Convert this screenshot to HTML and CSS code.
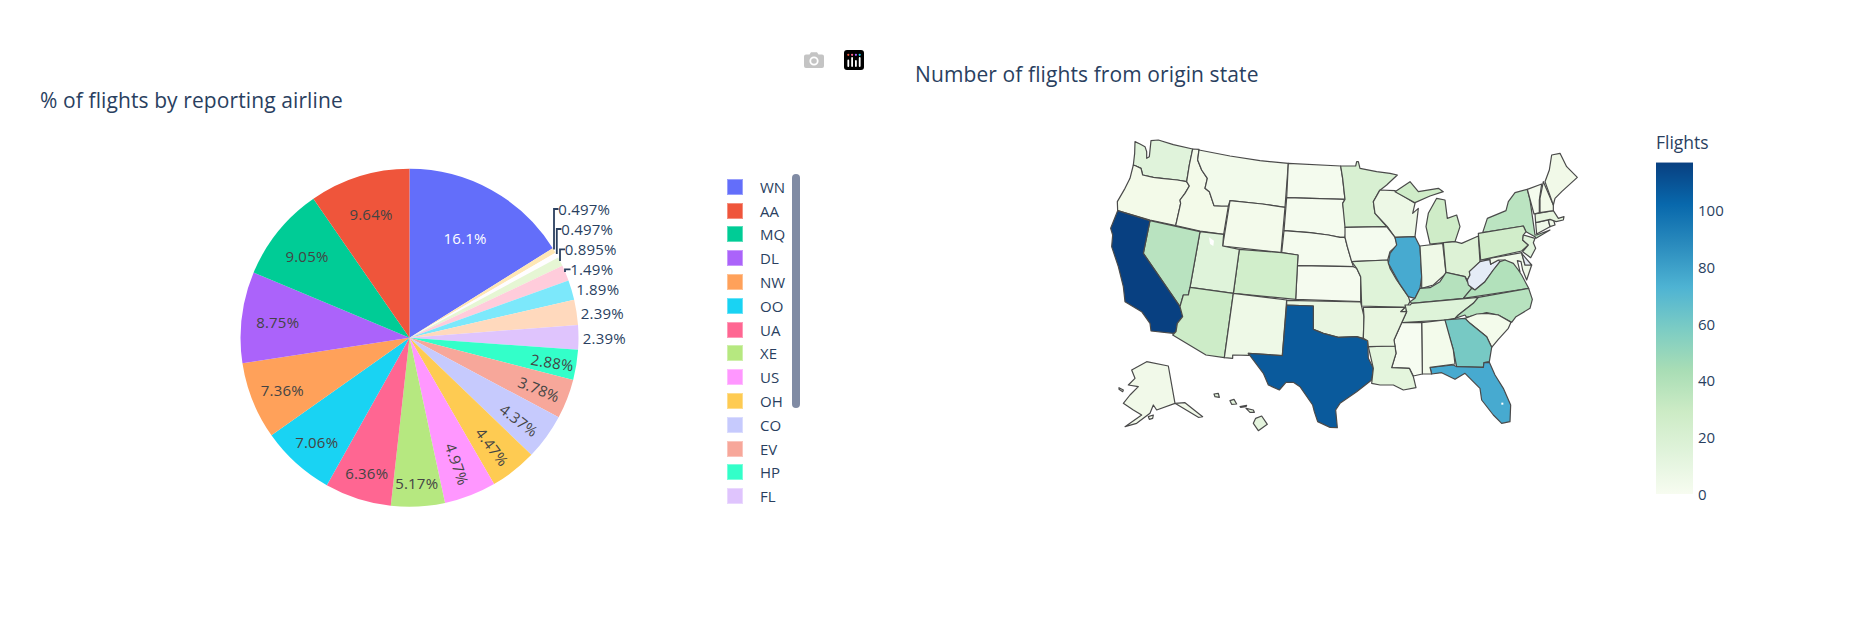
FILE: index.html
```html
<!DOCTYPE html>
<html lang="en">
<head>
<meta charset="utf-8">
<title>Flights dashboard</title>
<link rel="stylesheet" href="styles.css">
</head>
<body>
<main class="dash">
  <section class="panel panel-pie">
    <h2 class="chart-title">% of flights by reporting airline</h2>
    <div class="pie-row">
      <svg class="pie" viewBox="230 165 450 350" width="450" height="350" role="img" aria-label="Pie chart">
        <g transform="rotate(-90 409.5 337.8)" fill="none" stroke-width="169">
          <circle cx="409.5" cy="337.8" r="84.5" pathLength="100" stroke="#636efa" stroke-dasharray="16.1 100" stroke-dashoffset="0"/>
          <circle cx="409.5" cy="337.8" r="84.5" pathLength="100" stroke="#ffe7b6" stroke-dasharray="0.497 100" stroke-dashoffset="-16.1"/>
          <circle cx="409.5" cy="337.8" r="84.5" pathLength="100" stroke="#fffdff" stroke-dasharray="0.497 100" stroke-dashoffset="-16.597"/>
          <circle cx="409.5" cy="337.8" r="84.5" pathLength="100" stroke="#e6f6d4" stroke-dasharray="0.895 100" stroke-dashoffset="-17.094"/>
          <circle cx="409.5" cy="337.8" r="84.5" pathLength="100" stroke="#ffccdb" stroke-dasharray="1.49 100" stroke-dashoffset="-17.989"/>
          <circle cx="409.5" cy="337.8" r="84.5" pathLength="100" stroke="#7ce8fb" stroke-dasharray="1.89 100" stroke-dashoffset="-19.479"/>
          <circle cx="409.5" cy="337.8" r="84.5" pathLength="100" stroke="#ffd9bd" stroke-dasharray="2.39 100" stroke-dashoffset="-21.369"/>
          <circle cx="409.5" cy="337.8" r="84.5" pathLength="100" stroke="#dfc4fd" stroke-dasharray="2.39 100" stroke-dashoffset="-23.759"/>
          <circle cx="409.5" cy="337.8" r="84.5" pathLength="100" stroke="#33ffc9" stroke-dasharray="2.88 100" stroke-dashoffset="-26.149"/>
          <circle cx="409.5" cy="337.8" r="84.5" pathLength="100" stroke="#f7a79a" stroke-dasharray="3.78 100" stroke-dashoffset="-29.029"/>
          <circle cx="409.5" cy="337.8" r="84.5" pathLength="100" stroke="#c6cafd" stroke-dasharray="4.37 100" stroke-dashoffset="-32.809"/>
          <circle cx="409.5" cy="337.8" r="84.5" pathLength="100" stroke="#fecb52" stroke-dasharray="4.47 100" stroke-dashoffset="-37.179"/>
          <circle cx="409.5" cy="337.8" r="84.5" pathLength="100" stroke="#ff97ff" stroke-dasharray="4.97 100" stroke-dashoffset="-41.649"/>
          <circle cx="409.5" cy="337.8" r="84.5" pathLength="100" stroke="#b6e880" stroke-dasharray="5.17 100" stroke-dashoffset="-46.619"/>
          <circle cx="409.5" cy="337.8" r="84.5" pathLength="100" stroke="#ff6692" stroke-dasharray="6.36 100" stroke-dashoffset="-51.789"/>
          <circle cx="409.5" cy="337.8" r="84.5" pathLength="100" stroke="#19d3f3" stroke-dasharray="7.06 100" stroke-dashoffset="-58.149"/>
          <circle cx="409.5" cy="337.8" r="84.5" pathLength="100" stroke="#ffa15a" stroke-dasharray="7.36 100" stroke-dashoffset="-65.209"/>
          <circle cx="409.5" cy="337.8" r="84.5" pathLength="100" stroke="#ab63fa" stroke-dasharray="8.75 100" stroke-dashoffset="-72.569"/>
          <circle cx="409.5" cy="337.8" r="84.5" pathLength="100" stroke="#00cc96" stroke-dasharray="9.05 100" stroke-dashoffset="-81.319"/>
          <circle cx="409.5" cy="337.8" r="84.5" pathLength="100" stroke="#ef553b" stroke-dasharray="9.64 100" stroke-dashoffset="-90.369"/>
        </g>
        <g class="leaders">
          <path d="M558.5 209H554V249.5"/>
          <path d="M561.5 229H556.8V254"/>
          <path d="M565 249.3H560V261"/>
          <path d="M570.5 269.3H565V272"/>
        </g>
        <g class="slice-in">
          <text class="slice-white" x="465" y="238.3">16.1%</text>
          <text x="371" y="214.3">9.64%</text>
          <text x="307" y="255.7">9.05%</text>
          <text x="277.7" y="322.3">8.75%</text>
          <text x="282.3" y="390.3">7.36%</text>
          <text x="316.7" y="441.7">7.06%</text>
          <text x="366.7" y="472.7">6.36%</text>
          <text x="416.7" y="483.3">5.17%</text>
          <text transform="rotate(71 457.3 464)" x="457.3" y="464">4.97%</text>
          <text transform="rotate(53 492.3 446.7)" x="492.3" y="446.7">4.47%</text>
          <text transform="rotate(37 519 420)" x="519" y="420">4.37%</text>
          <text transform="rotate(22 539 389)" x="539" y="389">3.78%</text>
          <text transform="rotate(9 552.3 362.3)" x="552.3" y="362.3">2.88%</text>
        </g>
        <g class="slice-out">
          <text x="604.3" y="337.7">2.39%</text>
          <text x="602.3" y="312.7">2.39%</text>
          <text x="597.7" y="289.3">1.89%</text>
          <text x="591.7" y="269.3">1.49%</text>
          <text x="590.7" y="249.3">0.895%</text>
          <text x="587.3" y="229.3">0.497%</text>
          <text x="584.3" y="209.3">0.497%</text>
        </g>
      </svg>
      <ul class="legend">
        <li class="legend-item"><span class="swatch c-wn"></span>WN</li>
        <li class="legend-item"><span class="swatch c-aa"></span>AA</li>
        <li class="legend-item"><span class="swatch c-mq"></span>MQ</li>
        <li class="legend-item"><span class="swatch c-dl"></span>DL</li>
        <li class="legend-item"><span class="swatch c-nw"></span>NW</li>
        <li class="legend-item"><span class="swatch c-oo"></span>OO</li>
        <li class="legend-item"><span class="swatch c-ua"></span>UA</li>
        <li class="legend-item"><span class="swatch c-xe"></span>XE</li>
        <li class="legend-item"><span class="swatch c-us"></span>US</li>
        <li class="legend-item"><span class="swatch c-oh"></span>OH</li>
        <li class="legend-item"><span class="swatch c-co"></span>CO</li>
        <li class="legend-item"><span class="swatch c-ev"></span>EV</li>
        <li class="legend-item"><span class="swatch c-hp"></span>HP</li>
        <li class="legend-item"><span class="swatch c-fl"></span>FL</li>
      </ul>
      <div class="legend-scroll"></div>
    </div>
  </section>

  <section class="panel panel-map">
    <h2 class="chart-title">Number of flights from origin state</h2>
    <div class="map-row">
      <svg class="map" viewBox="0 0 1500 1200" width="500" height="400" role="img" aria-label="US map">
        <g class="states">
          <polygon fill="#e0f3db" points="135,65 150,72 165,80 170,95 170,115 178,110 183,62 205,60 250,74 308,87 298,135 290,185 262,180 215,175 190,172 158,165 153,145 138,138 130,135 134,100"/>
          <polygon fill="#f3fae9" points="130,135 138,138 153,145 158,165 190,172 215,175 262,180 290,185 298,198 285,220 270,240 272,250 257,317 180,300 83,272 82,245 105,205 120,175"/>
          <polygon fill="#f3fae9" points="308,87 327,88 323,120 335,150 352,175 345,205 358,215 372,257 395,258 415,258 401,343 330,333 257,317 272,250 270,240 285,220 298,198 290,185 298,135"/>
          <polygon fill="#f2faeb" points="327,90 420,108 510,122 595,130 585,262 517,252 420,242 415,258 395,258 372,257 358,215 345,205 352,175 335,150 323,120"/>
          <polygon fill="#f3faeb" points="420,242 517,252 585,262 573,398 398,378"/>
          <polygon fill="#f4fbee" points="595,130 752,138 758,175 765,238 590,233"/>
          <polygon fill="#f4fbee" points="590,233 765,238 758,250 770,322 765,352 750,352 715,345 660,338 582,332"/>
          <polygon fill="#f4fbee" points="582,332 660,338 715,345 750,352 765,352 772,380 790,440 622,437 624,405 575,398"/>
          <polygon fill="#f5fbef" points="622,437 790,440 800,445 812,470 812,545 617,538"/>
          <polygon fill="#d1eecb" points="448,388 575,398 624,405 617,538 430,520"/>
          <polygon fill="#dff3da" points="330,335 401,343 398,378 448,388 430,520 300,502"/>
          <polygon fill="#b9e3c0" points="180,302 330,335 300,502 295,525 280,525 270,560 160,400"/>
          <polygon fill="#084081" points="83,272 180,302 160,400 270,560 278,590 262,610 258,635 250,640 183,633 180,610 155,575 105,545 100,500 85,440 65,380 68,345 62,325"/>
          <polygon fill="#cdecc8" points="300,502 430,520 403,713 348,705 248,645 258,635 262,610 278,590 270,560 280,525 295,525"/>
          <polygon fill="#eef9e7" points="430,520 590,540 577,707 475,700 478,706 428,705 428,715 403,713"/>
          <polygon fill="#e9f6e1" points="590,541 812,546 822,590 820,655 800,650 745,652 700,640 670,628 670,558 590,555"/>
          <polygon fill="#0a5a9c" points="590,555 670,558 670,628 700,640 745,652 800,650 833,662 835,715 850,745 845,780 800,815 750,850 737,870 742,923 720,922 683,905 673,875 668,855 630,800 610,787 588,787 568,810 535,795 520,760 475,700 577,707"/>
          <polygon fill="#d8f0d2" points="752,138 797,138 800,125 805,125 810,145 860,155 900,160 922,165 890,195 868,212 850,245 855,280 890,320 765,322 758,250 765,238 758,175"/>
          <polygon fill="#edf8e6" points="870,210 915,212 975,250 968,280 985,265 975,350 915,352 892,320 855,280 850,245"/>
          <polygon fill="#cfecc8" points="915,215 960,185 985,215 1045,205 1060,215 1020,228 975,248"/>
          <polygon fill="#cfecc8" points="1015,280 1040,235 1065,240 1072,295 1100,285 1110,320 1095,365 1020,372 1008,320"/>
          <polygon fill="#f4fbef" points="765,322 890,320 915,352 922,375 900,395 893,420 785,425 772,380 765,352"/>
          <polygon fill="#dff3d9" points="785,425 893,420 900,445 920,480 955,530 960,545 950,562 948,578 932,575 945,562 815,558 812,470 800,445"/>
          <polygon fill="#47aad0" points="915,352 975,350 990,380 995,470 990,505 975,535 955,530 928,490 895,430 900,400 920,375"/>
          <polygon fill="#eff9e7" points="990,378 1058,370 1068,460 1030,495 995,505 995,470"/>
          <polygon fill="#ddf2d6" points="1060,368 1095,365 1115,370 1165,348 1170,425 1138,455 1140,465 1132,480 1125,470 1068,458"/>
          <polygon fill="#b5e1bd" points="1020,503 1050,485 1068,457 1125,470 1132,485 1145,505 1120,535 965,550 960,545 975,535 990,505"/>
          <polygon fill="#e5ecf6" points="1132,480 1140,465 1138,455 1170,425 1200,418 1202,433 1225,420 1230,425 1210,450 1185,485 1155,510 1135,495"/>
          <polygon fill="#eff9e8" points="1172,420 1295,398 1305,435 1325,435 1310,480 1298,450 1293,425 1282,422 1290,455 1262,435 1245,420 1225,420 1202,433 1200,418"/>
          <polygon fill="#b2e1bb" points="1120,535 1145,505 1155,510 1185,485 1210,450 1230,425 1245,420 1270,430 1285,450 1295,465 1316,505"/>
          <polygon fill="#def3d9" points="945,555 960,555 965,550 1165,532 1150,550 1105,585 1095,595 1065,600 935,608 950,575"/>
          <polygon fill="#b7e2bf" points="1165,532 1316,505 1327,538 1320,565 1278,590 1265,607 1225,585 1190,578 1130,592 1125,585 1095,595 1105,585 1150,550"/>
          <polygon fill="#f3fbeb" points="1125,595 1160,582 1190,580 1225,585 1263,607 1255,625 1225,658 1205,682 1190,650 1140,610"/>
          <polygon fill="#77c9c4" points="1063,600 1125,595 1140,610 1190,650 1205,682 1198,725 1182,728 1180,742 1100,740 1090,690"/>
          <polygon fill="#47aad0" points="1020,742 1090,735 1100,740 1180,742 1182,728 1198,727 1215,765 1240,805 1262,855 1260,905 1235,910 1210,885 1175,840 1170,805 1125,760 1095,778 1055,758 1025,762"/>
          <polygon fill="#f3fbeb" points="995,608 1065,600 1090,690 1095,732 1020,742 1025,762 997,762"/>
          <polygon fill="#f6fcf1" points="935,608 995,608 997,762 970,768 958,745 905,743 918,700 912,660"/>
          <polygon fill="#e4f5dd" points="835,680 915,678 918,700 905,743 958,745 970,770 978,803 940,810 910,795 870,795 845,790 850,745"/>
          <polygon fill="#e8f6e0" points="820,562 945,562 932,575 950,575 935,608 912,660 915,678 835,680 833,662 820,655 822,590"/>
          <polygon fill="#bbe4c1" points="1178,338 1192,295 1248,272 1255,245 1275,218 1312,208 1320,240 1335,345 1340,345 1380,330 1338,355 1335,350 1308,335 1300,318"/>
          <polygon fill="#d1edca" points="1165,340 1300,318 1308,335 1300,345 1298,360 1315,375 1295,393 1172,420"/>
          <polygon fill="#e0f3db" points="1300,345 1335,355 1330,368 1337,385 1322,413 1298,395 1315,375 1298,360"/>
          <polygon fill="#e5ecf6" points="1295,400 1325,435 1305,435"/>
          <polygon fill="#f0f9e9" points="1337,308 1375,300 1380,320 1340,342"/>
          <polygon fill="#f0f9e9" points="1375,300 1390,297 1395,315 1380,320"/>
          <polygon fill="#e7f6df" points="1335,282 1390,272 1405,295 1422,290 1420,300 1398,305 1380,298 1337,308"/>
          <polygon fill="#f4fbee" points="1312,208 1355,192 1348,240 1348,278 1332,282"/>
          <polygon fill="#f2fae9" points="1360,185 1390,255 1390,272 1350,278 1350,235"/>
          <polygon fill="#f1f9e8" points="1365,185 1378,150 1385,105 1410,100 1430,140 1462,172 1415,215 1395,235 1390,255"/>
          <polygon fill="#f1f9e9" points="170,725 235,738 255,850 285,848 338,890 325,892 280,865 255,850 200,870 190,855 180,880 140,910 105,920 155,885 130,870 100,850 120,825 145,800 115,795 135,775 125,750"/>
          <polygon fill="#f1f9e9" points="175,890 190,885 188,895 178,898"/>
          <polygon fill="#f1f9e9" points="87,803 100,810 98,815 87,808"/>
          <polygon fill="#e4f4dd" points="372,822 385,820 388,832 375,830"/>
          <polygon fill="#e4f4dd" points="420,842 432,838 440,852 425,853"/>
          <polygon fill="#e4f4dd" points="450,860 470,856 468,860 452,862"/>
          <polygon fill="#e4f4dd" points="468,865 490,870 493,877 480,877"/>
          <polygon fill="#e4f4dd" points="497,895 515,888 532,913 505,932 490,910"/>
        </g>
        <polygon class="map-gap" points="357,352 372,362 370,378 360,372"/>
        <rect class="map-gap" x="1234" y="848" width="6" height="6"/>
      </svg>
      <div class="colorbar">
        <div class="colorbar-title">Flights</div>
        <div class="colorbar-body">
          <div class="colorbar-ramp"></div>
          <ul class="colorbar-ticks">
            <li>100</li><li>80</li><li>60</li><li>40</li><li>20</li><li>0</li>
          </ul>
        </div>
      </div>
    </div>
  </section>
</main>

<div class="modebar">
  <svg class="modebar-icon" viewBox="0 0 20 16" width="20" height="16" aria-label="Download plot">
    <path class="cam-body" d="M2 2.5h3.5L7 .2h6l1.5 2.3H18a2 2 0 0 1 2 2V14a2 2 0 0 1-2 2H2a2 2 0 0 1-2-2V4.500a2 2 0 0 1 2-2z"/>
    <circle class="cam-ring" cx="10" cy="9" r="3.700"/>
  </svg>
  <svg class="modebar-logo" viewBox="0 0 20 20" width="20" height="20" aria-label="Plotly">
    <rect width="20" height="20" rx="3"/>
    <circle class="d1" cx="4.300" cy="4.800" r="1.100"/>
    <circle class="d2" cx="8.100" cy="4.800" r="1.100"/>
    <circle class="d3" cx="11.900" cy="4.800" r="1.100"/>
    <circle class="d4" cx="15.700" cy="4.800" r="1.100"/>
    <path class="bars" d="M4.300 10.500V16M8.100 8V16M11.900 11V16M15.700 8V16"/>
  </svg>
</div>
</body>
</html>
```
FILE: styles.css
```css
* { box-sizing: border-box; }
html, body { margin: 0; padding: 0; background: #fff; }
body {
  width: 1876px;
  height: 630px;
  overflow: hidden;
  position: relative;
  font-family: "Open Sans", "Liberation Sans", sans-serif;
  color: #2a3f5f;
}
.dash { display: flex; align-items: flex-start; }
.panel { display: flex; flex-direction: column; }
.panel-pie { width: 915px; padding: 86px 0 0 40px; }
.panel-map { padding-top: 60px; }
.chart-title {
  margin: 0;
  font-size: 21px;
  font-weight: 400;
  letter-spacing: .1px;
  line-height: 28px;
  white-space: nowrap;
}
.pie-row { display: flex; align-items: flex-start; margin: 51px 0 0 190px; }
.pie { display: block; flex: none; }
.pie text { font-size: 15px; letter-spacing: .2px; text-anchor: middle; dominant-baseline: central; }
.slice-in text { fill: #444; }
.slice-in .slice-white { fill: #fff; }
.slice-out text { fill: #2a3f5f; }
.leaders path { fill: none; stroke: #2a3f5f; stroke-width: 1.800; }
.legend {
  list-style: none;
  margin: 10px 0 0 47px;
  padding: 0;
  width: 65px;
  flex: none;
}
.legend-item {
  display: flex;
  align-items: center;
  gap: 17px;
  height: 23.800px;
  font-size: 15px;
}
.swatch {
  width: 16px;
  height: 16px;
  flex: none;
  box-shadow: inset 0 0 0 1px rgba(255, 255, 255, .35);
}
.c-wn { background: #636efa; }
.c-aa { background: #ef553b; }
.c-mq { background: #00cc96; }
.c-dl { background: #ab63fa; }
.c-nw { background: #ffa15a; }
.c-oo { background: #19d3f3; }
.c-ua { background: #ff6692; }
.c-xe { background: #b6e880; }
.c-us { background: #ff97ff; }
.c-oh { background: #fecb52; }
.c-co { background: #c6cafd; }
.c-ev { background: #f7a79a; }
.c-hp { background: #33ffc9; }
.c-fl { background: #dfc4fd; }
.legend-scroll {
  width: 7.500px;
  height: 234px;
  margin: 9px 0 0 0;
  border-radius: 4px;
  background: #808ba4;
  flex: none;
}
.map-row { display: flex; align-items: flex-start; margin: 32px 0 0 175px; }
.map { display: block; flex: none; }
.states polygon { stroke: #4a4a4a; stroke-width: 3.600; stroke-linejoin: round; }
.map-gap { fill: #fff; }
.colorbar { margin: 11px 0 0 66px; }
.colorbar-title { font-size: 17.500px; line-height: 22px; height: 31px; }
.colorbar-body { display: flex; gap: 5px; }
.colorbar-ramp {
  width: 37px;
  height: 332px;
  border-top: 1px solid #8fa6c4;
  background: linear-gradient(to top,
    #f7fcf0 0%, #e0f3db 12.5%, #ccebc5 25%, #a8ddb5 37.5%, #7bccc4 50%,
    #4eb3d3 62.5%, #2b8cbe 75%, #0868ac 87.5%, #084081 100%);
}
.colorbar-ticks {
  list-style: none;
  margin: 48px 0 0 0;
  padding: 0;
  height: 284px;
  display: flex;
  flex-direction: column;
  justify-content: space-between;
  font-size: 15px;
}
.colorbar-ticks li { height: 0; line-height: 0; }
.modebar {
  position: absolute;
  left: 804px;
  top: 50px;
  display: flex;
  align-items: center;
  gap: 20px;
}
.modebar-icon { display: block; }
.cam-body { fill: #c4c4c4; }
.cam-ring { fill: #c4c4c4; stroke: #fff; stroke-width: 1.800; }
.modebar-logo { display: block; }
.d1 { fill: #ef553b; }
.d2 { fill: #ff6692; }
.d3 { fill: #ab63fa; }
.d4 { fill: #19d3f3; }
.bars { fill: none; stroke: #fff; stroke-width: 1.800; stroke-linecap: round; }
```
